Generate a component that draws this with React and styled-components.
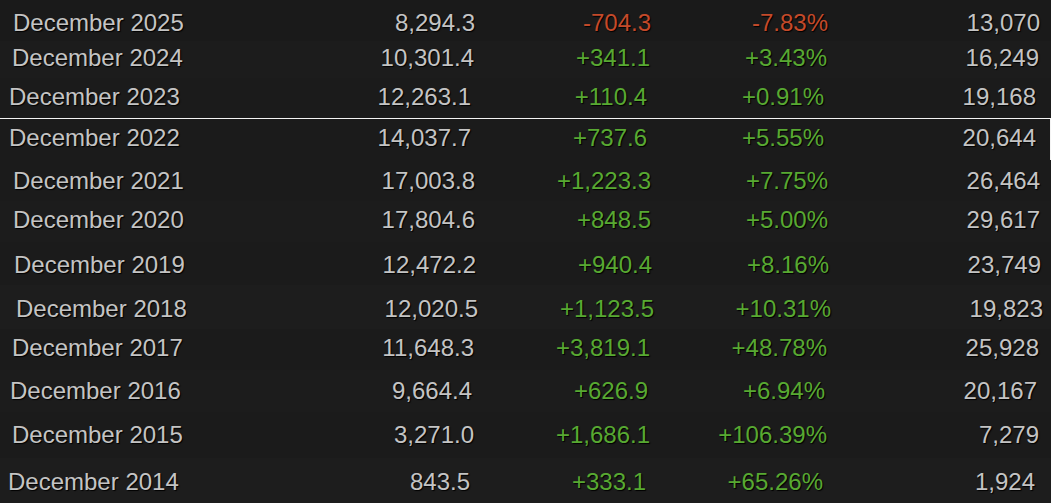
import React from "react";
import styled, { createGlobalStyle } from "styled-components";

const GlobalStyle = createGlobalStyle`
  html, body {
    margin: 0;
    padding: 0;
    background: #1b1b1b;
  }
  body {
    font-family: "Liberation Sans", Arial, sans-serif;
    overflow: hidden;
  }
`;

const rows = [
  { month: "December 2025", avg: "8,294.3", gain: "-704.3", pct: "-7.83%", peak: "13,070", h: 41, pt: 9, shift: 13, bg: "#1a1a1a" },
  { month: "December 2024", avg: "10,301.4", gain: "+341.1", pct: "+3.43%", peak: "16,249", h: 37, pt: 3, shift: 12, bg: "#1c1c1c" },
  { month: "December 2023", avg: "12,263.1", gain: "+110.4", pct: "+0.91%", peak: "19,168", h: 40, pt: 5, shift: 9, bg: "#1b1b1b" },
  { month: "December 2022", avg: "14,037.7", gain: "+737.6", pct: "+5.55%", peak: "20,644", h: 42, pt: 5, shift: 9, bg: "#1b1b1b", outlined: true },
  { month: "December 2021", avg: "17,003.8", gain: "+1,223.3", pct: "+7.75%", peak: "26,464", h: 41, pt: 7, shift: 13, bg: "#1b1b1b" },
  { month: "December 2020", avg: "17,804.6", gain: "+848.5", pct: "+5.00%", peak: "29,617", h: 41, pt: 5, shift: 13, bg: "#1c1c1c" },
  { month: "December 2019", avg: "12,472.2", gain: "+940.4", pct: "+8.16%", peak: "23,749", h: 43, pt: 9, shift: 14, bg: "#1b1b1b" },
  { month: "December 2018", avg: "12,020.5", gain: "+1,123.5", pct: "+10.31%", peak: "19,823", h: 44, pt: 10, shift: 16, bg: "#1d1d1d" },
  { month: "December 2017", avg: "11,648.3", gain: "+3,819.1", pct: "+48.78%", peak: "25,928", h: 41, pt: 5, shift: 12, bg: "#1b1b1b" },
  { month: "December 2016", avg: "9,664.4", gain: "+626.9", pct: "+6.94%", peak: "20,167", h: 42, pt: 7, shift: 10, bg: "#1c1c1c" },
  { month: "December 2015", avg: "3,271.0", gain: "+1,686.1", pct: "+106.39%", peak: "7,279", h: 46, pt: 9, shift: 12, bg: "#1b1b1b" },
  { month: "December 2014", avg: "843.5", gain: "+333.1", pct: "+65.26%", peak: "1,924", h: 45, pt: 10, shift: 8, bg: "#1d1d1d" },
];

const StatsTable = () => (
  <Table>
    {rows.map((r) => {
      const tone = r.gain.startsWith("-") ? "down" : "up";
      return (
        <Row
          key={r.month}
          $h={r.h}
          $pt={r.pt}
          $shift={r.shift}
          $bg={r.bg}
          $outlined={r.outlined}
        >
          <MonthCell>{r.month}</MonthCell>
          <NumCell>{r.avg}</NumCell>
          <NumCell $tone={tone}>{r.gain}</NumCell>
          <NumCell $tone={tone}>{r.pct}</NumCell>
          <NumCell>{r.peak}</NumCell>
        </Row>
      );
    })}
  </Table>
);

const App = () => (
  <>
    <GlobalStyle />
    <StatsTable />
  </>
);

const toneColor = {
  up: "#58a932",
  down: "#c44a2a",
};

const Table = styled.div`
  display: flex;
  flex-direction: column;
  width: 1051px;
  height: 503px;
  background: #1b1b1b;
  overflow: hidden;
`;

const Row = styled.div`
  box-sizing: border-box;
  display: grid;
  grid-template-columns: 230px 232px 176px 177px 212px;
  align-items: start;
  height: ${(p) => p.$h}px;
  padding-top: ${(p) => p.$pt}px;
  padding-left: ${(p) => p.$shift}px;
  background: ${(p) => p.$bg};
  border-top: ${(p) => (p.$outlined ? "1px solid #f4f4f4" : "none")};
  border-right: ${(p) => (p.$outlined ? "1px solid #f4f4f4" : "none")};
  width: ${(p) => (p.$outlined ? "1051px" : "auto")};
`;

const Cell = styled.div`
  font-size: 24px;
  line-height: 28px;
  white-space: nowrap;
  text-shadow: 1px 1px 1px #000;
`;

const MonthCell = styled(Cell)`
  color: #c4c4c4;
  text-align: left;
`;

const NumCell = styled(Cell)`
  color: ${(p) => (p.$tone ? toneColor[p.$tone] : "#c4c4c4")};
  text-align: right;
`;

export default App;
